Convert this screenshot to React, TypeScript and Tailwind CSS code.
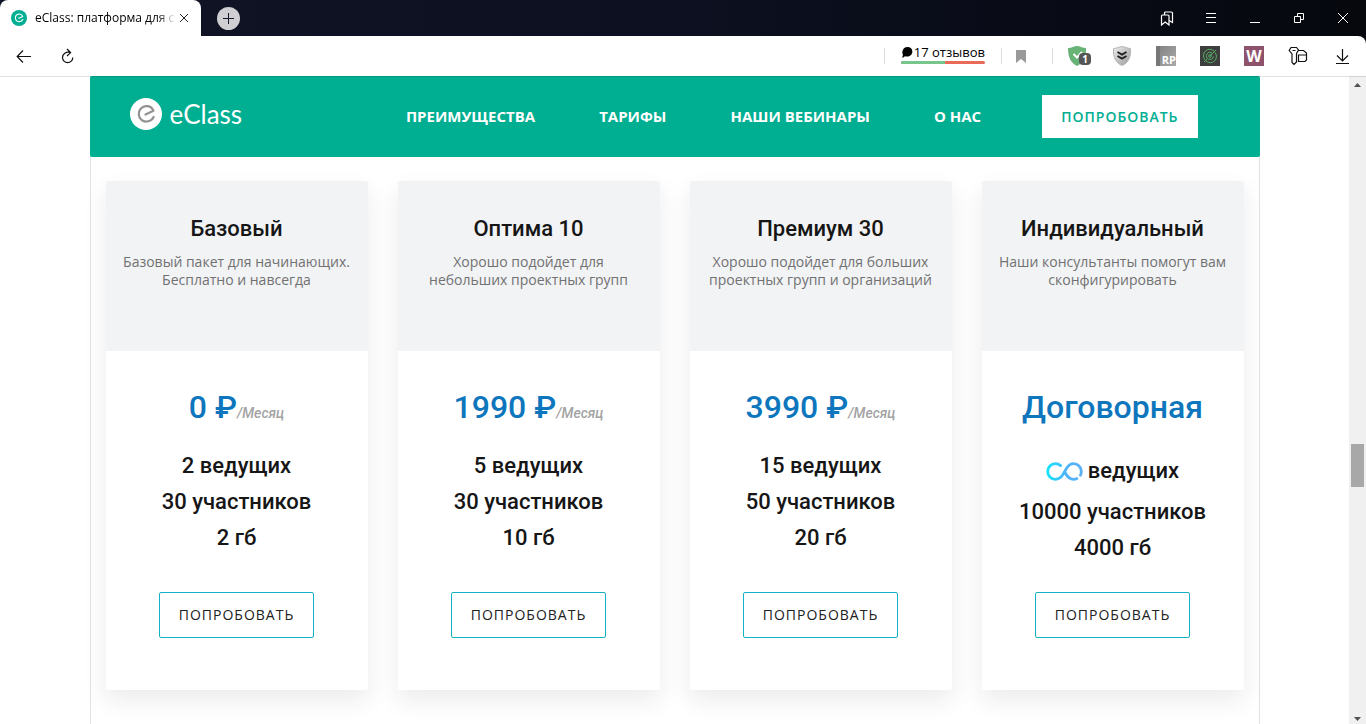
import React from "react"

interface Plan {
  title: string
  description: string[]
  price: string
  period?: string
  unlimitedHosts?: boolean
  hosts: string
  members: string
  storage: string
}

const plans: Plan[] = [
  {
    title: "Базовый",
    description: ["Базовый пакет для начинающих.", "Бесплатно и навсегда"],
    price: "0 ₽",
    period: "/Месяц",
    hosts: "2 ведущих",
    members: "30 участников",
    storage: "2 гб",
  },
  {
    title: "Оптима 10",
    description: ["Хорошо подойдет для", "небольших проектных групп"],
    price: "1990 ₽",
    period: "/Месяц",
    hosts: "5 ведущих",
    members: "30 участников",
    storage: "10 гб",
  },
  {
    title: "Премиум 30",
    description: ["Хорошо подойдет для больших", "проектных групп и организаций"],
    price: "3990 ₽",
    period: "/Месяц",
    hosts: "15 ведущих",
    members: "50 участников",
    storage: "20 гб",
  },
  {
    title: "Индивидуальный",
    description: ["Наши консультанты помогут вам", "сконфигурировать"],
    price: "Договорная",
    unlimitedHosts: true,
    hosts: "ведущих",
    members: "10000 участников",
    storage: "4000 гб",
  },
]

const links = ["Преимущества", "Тарифы", "Наши вебинары", "О нас"]

function LogoMark({ size, circle, stroke }: { size: number; circle: string; stroke: string }) {
  return (
    <svg width={size} height={size} viewBox="0 0 32 32" fill="none" aria-hidden="true">
      <circle cx="16" cy="16" r="16" fill={circle} />
      <path
        d="M15.5 16.5L23.5 12.8C22 9.5 19 7.8 15.8 8.2C11.4 8.7 8.4 12.3 8.8 16.6C9.2 21 12.8 24 17 23.5C20 23.2 22.4 21.6 23.6 19"
        stroke={stroke}
        strokeWidth="2.2"
        strokeLinecap="round"
        strokeLinejoin="round"
      />
    </svg>
  )
}

function InfinityIcon() {
  return (
    <svg width="37" height="19" viewBox="0 0 37 19" fill="none" aria-hidden="true">
      <defs>
        <linearGradient id="infinity" x1="0" y1="0" x2="37" y2="0" gradientUnits="userSpaceOnUse">
          <stop stopColor="#0fe6ff" />
          <stop offset="0.55" stopColor="#4fb4f8" />
          <stop offset="1" stopColor="#5cb0f8" />
        </linearGradient>
      </defs>
      <path
        d="M14.6 3.6C13.2 2.4 11.4 1.7 9.4 1.7C5 1.7 1.7 5.2 1.7 9.5S5 17.3 9.4 17.3C12.8 17.3 15 15.6 16.8 12.8L20.6 6.200C22.4 3.400 24.6 1.700 27.600 1.700C32 1.700 35.300 5.200 35.300 9.500C35.300 11 35 12.200 34.400 13.300M19 10.500C21.200 14.800 23.800 17.300 27.600 17.300C28.800 17.300 30 17.100 31 16.600"
        stroke="url(#infinity)"
        strokeWidth="2.800"
        strokeLinecap="round"
      />
    </svg>
  )
}

function TabBar() {
  return (
    <div className="flex h-9 items-stretch bg-gradient-to-r from-[#101426] via-[#0c1020] to-[#06080e] text-white">
      <div className="flex w-[201px] items-center rounded-t-lg bg-white pl-[11px] pr-3 text-black">
        <LogoMark size={16} circle="#00ae92" stroke="#fff" />
        <span className="ml-2 flex-1 whitespace-nowrap bg-gradient-to-r from-black from-85% to-white bg-clip-text text-xs text-transparent">
          eClass: платформа для с
        </span>
        <button aria-label="Закрыть вкладку" className="ml-1">
          <svg width="10" height="10" viewBox="0 0 10 10" stroke="#222">
            <path d="M1 1L9 9M9 1L1 9" />
          </svg>
        </button>
      </div>
      <div className="flex items-center pl-4">
        <button
          aria-label="Новая вкладка"
          className="flex size-[23px] items-center justify-center rounded-full bg-[#cfcfd3]"
        >
          <svg width="11" height="11" viewBox="0 0 11 11" stroke="#111528">
            <path d="M5.5 0V11M0 5.5H11" />
          </svg>
        </button>
      </div>
      <div className="ml-auto flex items-center gap-7 pr-[15px]">
        <button aria-label="Закладки">
          <svg width="16" height="16" viewBox="0 0 16 16" fill="none" stroke="#fff" strokeWidth="1.2">
            <path d="M2.500 6a1 1 0 0 1 1-1h5.500a1 1 0 0 1 1 1v9L6.200 12L2.500 15Z" />
            <path d="M5.500 5V3a1 1 0 0 1 1-1H12.500a1 1 0 0 1 1 1V12.500L10 10.500" />
          </svg>
        </button>
        <button aria-label="Меню">
          <svg width="16" height="16" viewBox="0 0 16 16" stroke="#fff">
            <path d="M3 3.5H13M3 7.5H13M3 12.5H13" />
          </svg>
        </button>
        <button aria-label="Свернуть">
          <svg width="16" height="16" viewBox="0 0 16 16" stroke="#fff">
            <path d="M3 12.5H13" />
          </svg>
        </button>
        <button aria-label="Развернуть">
          <svg width="16" height="16" viewBox="0 0 16 16" fill="none" stroke="#fff">
            <path d="M3.5 6.5H9.5V12.5H3.5ZM6.5 6.5V3.5H12.5V9.5H9.5" />
          </svg>
        </button>
        <button aria-label="Закрыть">
          <svg width="16" height="16" viewBox="0 0 16 16" stroke="#fff">
            <path d="M3 3L13 13M13 3L3 13" />
          </svg>
        </button>
      </div>
    </div>
  )
}

function Extensions() {
  return (
    <div className="flex items-center gap-6">
      <button aria-label="Защита" className="relative">
        <svg width="20" height="20" viewBox="0 0 20 20">
          <path d="M0 2C4 2 6 0 9 0S14 2 18 2C18.500 12 15 17 9 20C3 17 0 12 0 2Z" fill="#68b375" />
          <path d="M5.500 8L9 11.500L14 6" fill="none" stroke="#fff" strokeWidth="2" />
        </svg>
        <span className="absolute left-[11px] top-[7px] flex h-3 w-3 items-center justify-center rounded-sm bg-[#555] text-[10px] font-bold leading-3 text-white">
          1
        </span>
      </button>
      <button aria-label="Безопасность">
        <svg width="20" height="20" viewBox="0 0 20 20">
          <defs>
            <linearGradient id="steel" x1="0" y1="0" x2="1" y2="1">
              <stop stopColor="#eee" />
              <stop offset="1" stopColor="#999" />
            </linearGradient>
          </defs>
          <path
            d="M1.500 2.500C5 2.500 7 .6 10 .6S15 2.500 18.500 2.500C19 12 16 17 10 19.500C4 17 1 12 1.500 2.500Z"
            fill="url(#steel)"
            stroke="#b5b5b5"
          />
          <path d="M5.500 6L10 8.500L14.500 6M5.500 10L10 12.500L14.500 10" fill="none" stroke="#222" strokeWidth="2" />
        </svg>
      </button>
      <button
        aria-label="Журнал"
        className="flex size-5 items-end justify-end border-l-4 border-[#777] bg-gradient-to-br from-[#858585] to-[#aaa] text-[11px] font-bold leading-3 text-white"
      >
        RP
      </button>
      <button aria-label="Сканер" className="flex size-5 items-center justify-center bg-[#3e3e3e]">
        <svg width="16" height="16" viewBox="0 0 16 16" fill="none" stroke="#55ad62">
          <path d="M12.500 3.500A6.200 6.200 0 0 0 3 11.800M4 13A6.200 6.200 0 0 0 13 4.500M10.500 5.300A3.600 3.600 0 1 0 11.500 8.500M2 14L5 11M8 8L14 2" />
          <circle cx="8" cy="8" r="1.300" />
        </svg>
      </button>
      <button
        aria-label="Словарь"
        className="flex size-5 items-center justify-center bg-[#8f526d] text-base font-bold text-white"
      >
        W
      </button>
      <button aria-label="Пароли">
        <svg width="20" height="20" viewBox="0 0 20 20" fill="none" stroke="#111" strokeWidth="1.200">
          <path d="M3 1.500H8.500L10.500 4L8.500 7.500V16L6 18.500L4 16.500V8L1.200 4.500ZM4.500 4.500H7.500" />
          <path d="M10 4.500H15.500L18.500 7V14L17 15.500H10.500V9H18.500" />
        </svg>
      </button>
      <button aria-label="Загрузки">
        <svg width="20" height="20" viewBox="0 0 20 20" fill="none" stroke="#111" strokeWidth="1.200">
          <path d="M10.500 3V15M5 9.500L10.500 15L16 9.500M4 17.500H17" />
        </svg>
      </button>
    </div>
  )
}

function Toolbar() {
  return (
    <div className="bg-[#06080e]">
      <div className="relative z-10 flex h-10 items-center rounded-tr-lg bg-white pl-4 pr-[14px] shadow-[0_1px_0_rgba(0,0,0,0.12)]">
        <button aria-label="Назад">
          <svg width="16" height="16" viewBox="0 0 16 16" fill="none" stroke="#111" strokeWidth="1.200">
            <path d="M15 8.500H1.500M7 2.500L1.200 8.500L7 14.500" />
          </svg>
        </button>
        <button aria-label="Обновить" className="ml-7">
          <svg width="16" height="16" viewBox="0 0 16 16" fill="none" stroke="#111" strokeWidth="1.200">
            <path d="M10.500 4.500C6 3.200 2.500 6 2.500 9.500A5 5 0 0 0 12.800 9.500M7 1L10.600 4.600L7 8" />
          </svg>
        </button>
        <div className="ml-auto flex items-center">
          <span className="h-4 w-px bg-[#ddd]" />
          <a href="#reviews" className="ml-4 flex w-[84px] flex-col text-[13px] leading-4 text-black">
            <span className="flex items-center justify-center gap-px whitespace-nowrap">
              <svg width="12" height="11" viewBox="0 0 13 12" aria-hidden="true">
                <path d="M7 0C10.500 0 12.500 2.300 12.500 5S10.500 10.500 7 10.500C6 10.500 5 10.300 4.300 10C3.500 11 2.500 11.500 1 11.500C1.800 10.600 2.200 9.500 2 8.300C.5 5 2.500 0 7 0Z" />
              </svg>
              17 отзывов
            </span>
            <span className="mb-1 mt-px flex h-[3px] overflow-hidden rounded-full bg-[#ea6a5a]">
              <span className="w-[52%] bg-[#77c68b]" />
            </span>
          </a>
          <span className="ml-4 h-4 w-px bg-[#ddd]" />
          <button aria-label="В закладки" className="ml-[14px]">
            <svg width="10" height="13" viewBox="0 0 10 13">
              <path d="M0 0H10V13L5 9L0 13Z" fill="#999" />
            </svg>
          </button>
          <span className="ml-[26px] mr-[15px] h-4 w-px bg-[#ddd]" />
          <Extensions />
        </div>
      </div>
    </div>
  )
}

function SiteHeader() {
  return (
    <header className="-mx-px flex h-[81px] items-center justify-between rounded-xs bg-[#00ae92] pl-10 pr-[62px]">
      <a href="#home" className="mb-[5px] flex items-center gap-2 font-['Lato',sans-serif] text-[26px] leading-8 text-white">
        <LogoMark size={32} circle="#fff" stroke="#929292" />
        eClass
      </a>
      <nav className="flex items-center gap-16 text-[15px] font-bold uppercase text-white">
        {links.map((link) => (
          <a key={link} href="#nav" className="whitespace-nowrap">
            {link}
          </a>
        ))}
        <button className="-ml-[3px] h-[43px] bg-white px-[19px] text-sm font-semibold uppercase tracking-[1px] text-[#00ae92]">
          Попробовать
        </button>
      </nav>
    </header>
  )
}

function PlanCard({ plan }: { plan: Plan }) {
  return (
    <article className="flex flex-col overflow-hidden rounded-xs bg-white text-center shadow-[0_10px_25px_rgba(30,35,55,0.09)]">
      <div className="min-h-[170px] bg-[#f2f3f5] pt-[35px]">
        <h2 className="font-['Roboto',sans-serif] text-[22px] font-medium leading-[26px] text-[#161616]">{plan.title}</h2>
        <p className="mt-[11px] whitespace-nowrap text-sm leading-[18px] text-[#717171]">
          {plan.description[0]}
          <br />
          {plan.description[1]}
        </p>
      </div>
      <div className="flex min-h-[339px] flex-1 flex-col items-center pb-[52px] pt-9 font-['Roboto',sans-serif] font-medium">
        <p className="text-[32px] leading-10 text-[#0e76bc]">
          {plan.price}
          {plan.period && <em className="text-sm text-[#a3a3a3]">{plan.period}</em>}
        </p>
        <ul className="mt-[21px] text-[22px] leading-9 text-[#161616]">
          <li className={plan.unlimitedHosts ? "flex h-[46px] items-center justify-center gap-[5px]" : ""}>
            {plan.unlimitedHosts && <InfinityIcon />}
            {plan.hosts}
          </li>
          <li>{plan.members}</li>
          <li>{plan.storage}</li>
        </ul>
        <button className="mt-auto h-[46px] rounded-xs border border-[#14b1c4] px-[19px] font-['Open_Sans',sans-serif] text-sm font-normal uppercase tracking-[1px] text-[#222]">
          Попробовать
        </button>
      </div>
    </article>
  )
}

function Scrollbar() {
  return (
    <div className="flex w-[17px] flex-col items-center bg-[#f0f0f0] pb-[3px] pt-[7px]" aria-hidden="true">
      <svg width="7" height="4" viewBox="0 0 7 4">
        <path d="M0 4L3.500 0L7 4Z" fill="#505050" />
      </svg>
      <span className="mt-[357px] h-[43px] w-[13px] bg-[#a8a8a8]" />
      <svg width="7" height="4" viewBox="0 0 7 4" className="mt-auto">
        <path d="M0 0L3.500 4L7 0Z" fill="#505050" />
      </svg>
    </div>
  )
}

export default function App() {
  return (
    <div className="flex h-screen flex-col overflow-hidden bg-white font-['Open_Sans',sans-serif]">
      <TabBar />
      <Toolbar />
      <div className="flex min-h-0 flex-1">
        <main className="flex flex-1 justify-center overflow-hidden">
          <div className="w-full max-w-[1170px] border-x border-[#e2e2e2]">
            <SiteHeader />
            <section className="grid grid-cols-4 gap-[30px] px-[15px] pt-6">
              {plans.map((plan) => (
                <PlanCard key={plan.title} plan={plan} />
              ))}
            </section>
          </div>
        </main>
        <Scrollbar />
      </div>
    </div>
  )
}
